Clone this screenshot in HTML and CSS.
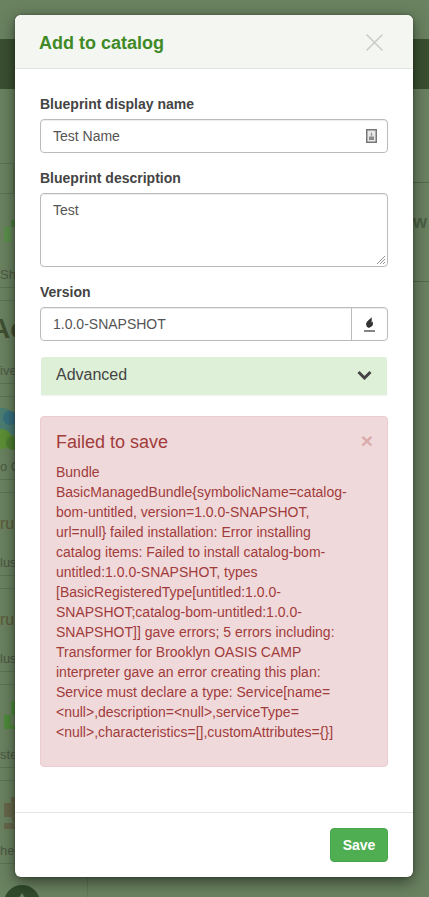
FILE: index.html
```html
<!DOCTYPE html>
<html lang="en">
<head>
<meta charset="utf-8">
<title>Add to catalog</title>
<link rel="stylesheet" href="styles.css">
</head>
<body>
<div class="page">
  <div class="topbar"></div>
  <div class="navband"></div>
  <div class="content">
    <div class="catalog">
      <div class="cat-head"></div>
      <div class="cat-row r2"><svg class="tile-icon" width="30" height="32" viewBox="0 0 30 32"><path fill="#5c8f4c" d="M4 7h7v15H4z"/><path fill="#4c7d40" d="M11 0h4v7h-4z"/></svg><span class="cat-text">Sho</span></div>
      <div class="cat-row r3"><span class="cat-logo">Ac</span><span class="cat-text">ive</span></div>
      <div class="cat-row r4"><svg class="tile-icon" width="30" height="60" viewBox="0 0 30 60"><circle cx="2" cy="21" r="16" fill="#4a7d72"/><circle cx="10" cy="15" r="7" fill="#37707f"/><circle cx="2" cy="36" r="10" fill="#5c8e35"/><circle cx="13" cy="40" r="7" fill="#4e7f32"/></svg><span class="cat-text">o C</span></div>
      <div class="cat-row r5"><span class="cat-name">ruc</span><span class="cat-text">lust</span></div>
      <div class="cat-row r6"><span class="cat-name">ruc</span><span class="cat-text">lust</span></div>
      <div class="cat-row r7"><svg class="tile-icon" width="30" height="36" viewBox="0 0 30 36"><path fill="#4f8a3c" d="M11 0h5v14h-5zM4 14h7v14H4zM11 24h5v4h-5z"/></svg><span class="cat-text">ster</span></div>
      <div class="cat-row r8"><svg class="tile-icon" width="30" height="36" viewBox="0 0 30 36"><path fill="#66684a" d="M11 0h5v6h-5zM4 6h11v14H4zM11 20h5v6H4v6h12z"/></svg><span class="cat-text">hed</span></div>
    </div>
    <div class="main-panel">
      <div class="main-row"><span class="main-letter">w</span></div>
    </div>
  </div>
  <div class="avatar"><svg width="36" height="36" viewBox="0 0 36 36"><path d="M18 8l7 11H11z" fill="#6a8260"/></svg></div>
</div>

<div class="modal">
  <header class="modal-head">
    <h1 class="modal-title">Add to catalog</h1>
    <svg class="close-icon" width="17" height="17" viewBox="0 0 17 17"><path d="M.5.5l16 16M16.500.5l-16 16" stroke="#c9ccc7" stroke-width="1.500" fill="none"/></svg>
  </header>
  <div class="modal-body">
    <label class="field-label">Blueprint display name</label>
    <div class="input-box">
      <span class="input-text">Test Name</span>
      <svg class="contact-icon" width="11" height="14" viewBox="0 0 11 14"><rect x=".75" y=".75" width="9.500" height="12.500" fill="#e8e8e8" stroke="#777" stroke-width="1.500"/><path d="M5.500 3l1 3.500h-2zM3 7.500h5v3.500H3z" fill="#8a8a8a"/></svg>
    </div>
    <label class="field-label">Blueprint description</label>
    <div class="textarea-box">
      <span class="input-text">Test</span>
      <svg class="resize-grip" width="8" height="8" viewBox="0 0 8 8"><path d="M0 8l8-8M3 8l5-5M6 8l2-2" stroke="#777" stroke-width=".8" fill="none"/></svg>
    </div>
    <label class="field-label">Version</label>
    <div class="input-box version-box">
      <span class="input-text">1.0.0-SNAPSHOT</span>
      <span class="addon"><svg width="11" height="15" viewBox="0 0 11 15"><path fill="#333" d="M7.500 0C7 1.500 5.500 2.300 4.200 3.400 2.600 4.800 1.800 6.300 2.200 8c.3 1.500 1.300 2.700 2.900 3 .2-.5.700-.8 1.400-1 1.500-.6 2.500-1.800 2.500-3.500 0-1-.4-1.800-1-2.500.1.800-.1 1.300-.6 1.700C7.700 4 8 2 7.500 0z"/><path d="M0 14h11" stroke="#333" stroke-width="1.200"/></svg></span>
    </div>
    <div class="advanced">
      <span class="advanced-text">Advanced</span>
      <svg width="15" height="10" viewBox="0 0 15 10"><path d="M1.500 2l6 6 6-6" stroke="#444" stroke-width="3" fill="none"/></svg>
    </div>
    <div class="alert">
      <span class="alert-close">×</span>
      <h2 class="alert-title">Failed to save</h2>
      <p class="alert-text">Bundle BasicManagedBundle{symbolicName=catalog-bom-untitled, version=1.0.0-SNAPSHOT, url=null} failed installation: Error installing catalog items: Failed to install catalog-bom-untitled:1.0.0-SNAPSHOT, types [BasicRegisteredType[untitled:1.0.0-SNAPSHOT;catalog-bom-untitled:1.0.0-SNAPSHOT]] gave errors; 5 errors including: Transformer for Brooklyn OASIS CAMP interpreter gave an error creating this plan: Service must declare a type: Service[name=&lt;null&gt;,description=&lt;null&gt;,serviceType=&lt;null&gt;,characteristics=[],customAttributes={}]</p>
    </div>
  </div>
  <footer class="modal-foot">
    <button class="save-btn">Save</button>
  </footer>
</div>
</body>
</html>
```
FILE: styles.css
```css
* { box-sizing: border-box; }
html, body { margin: 0; padding: 0; height: 100%; overflow: hidden; }
body {
  font-family: "Liberation Sans", Arial, sans-serif;
  font-size: 14px;
  color: #444;
  background: #6a8260;
}
.page { height: 897px; overflow: hidden; position: relative; }
.topbar { height: 39px; background: #6a8260; }
.navband { height: 50px; background: #3a5030; }
.content { display: flex; height: 808px; }
.catalog { padding-top: 74px; width: 88px; flex: none; border-right: 1px solid #5f7656; }
.cat-head {
  height: 31px;
  margin-bottom: 10px;
  width: 14px;
  border-top: 1px solid #5c7253;
  border-bottom: 1px solid #5c7253;
  border-right: 1px solid #5c7253;
}
.cat-row {
  height: 84px;
  margin-bottom: 12px;
  border-bottom: 1px solid #5c7253;
  border-top: 1px solid #5c7253;
  position: relative;
  overflow: hidden;
}
.r2 { border-top: none; }
.tile-icon { position: absolute; left: 0; top: 16px; }
.r4 .tile-icon { top: 6px; }
.cat-text {
  position: absolute;
  left: 0;
  bottom: 5px;
  font-size: 13px;
  color: #4a5843;
  line-height: 14px;
}
.cat-logo { position: absolute; left: -10px; top: 12px; font-size: 28px; font-weight: bold; color: #3f4f30; }
.cat-name { position: absolute; left: 0; top: 22px; font-size: 16px; color: #5d5a35; }
.main-panel { flex: 1; padding-top: 93px; }
.main-row {
  height: 100px;
  border-top: 1px solid #55694c;
  border-bottom: 1px solid #55694c;
  padding: 29px 0 0 325px;
  overflow: hidden;
}
.main-letter { display: block; font-size: 18px; font-weight: bold; line-height: 20px; color: #4c5f44; }
.avatar {
  position: absolute;
  left: 4px;
  top: 885px;
  width: 36px;
  height: 36px;
  border-radius: 50%;
  background: #2f4a2a;
}
.avatar svg { display: block; }
.modal {
  position: absolute;
  left: 15px;
  top: 15px;
  width: 398px;
  height: 862px;
  background: #fff;
  border-radius: 6px;
  box-shadow: 0 5px 15px rgba(0, 0, 0, .5), 0 0 3px rgba(0, 0, 0, .3);
  display: flex;
  flex-direction: column;
  overflow: hidden;
}
.modal-head {
  height: 54px;
  flex: none;
  background: #f4f6f1;
  border-bottom: 1px solid #e2e4e2;
  padding: 2px 30px 0 24px;
  display: flex;
  align-items: center;
  justify-content: space-between;
}
.modal-title { margin: 0; font-size: 18px; font-weight: bold; color: #3f8a26; line-height: 20px; }
.close-icon { display: block; }
.modal-body { flex: 1; padding: 27px 25px 0; }
.field-label { display: block; font-size: 14px; font-weight: bold; color: #444; line-height: 16px; margin-bottom: 7px; }
.input-box {
  height: 34px;
  border: 1px solid #bbb;
  border-radius: 4px;
  padding: 0 12px;
  display: flex;
  align-items: center;
  justify-content: space-between;
  margin-bottom: 17px;
  box-shadow: inset 0 1px 1px rgba(0, 0, 0, .075);
}
.input-text { font-size: 14px; color: #555; line-height: 20px; }
.contact-icon { margin-right: -2px; display: block; }
.textarea-box {
  height: 74px;
  border: 1px solid #bbb;
  border-radius: 4px;
  padding: 6px 12px;
  position: relative;
  margin-bottom: 17px;
  box-shadow: inset 0 1px 1px rgba(0, 0, 0, .075);
}
.textarea-box .input-text { display: block; }
.resize-grip { position: absolute; right: 2px; bottom: 2px; }
.version-box { padding-right: 0; margin-bottom: 16px; }
.addon {
  width: 36px;
  height: 32px;
  border-left: 1px solid #bbb;
  display: flex;
  align-items: center;
  justify-content: center;
}
.advanced {
  margin: 0 1px 21px;
  height: 38px;
  background: #dff0d8;
  border-radius: 3px 3px 0 0;
  box-shadow: 0 1px 1px rgba(0, 0, 0, .05);
  display: flex;
  align-items: center;
  justify-content: space-between;
  padding: 0 15px 2px 15px;
}
.advanced-text { font-size: 16px; color: #444; line-height: 18px; }
.alert {
  height: 351px;
  background: #f0d9da;
  border: 1px solid #ebccd1;
  border-radius: 4px;
  padding: 15px 35px 0 15px;
  position: relative;
  color: #a03c3c;
}
.alert-close {
  position: absolute;
  right: 14px;
  top: 13px;
  font-size: 21px;
  font-weight: bold;
  line-height: 21px;
  color: #a94442;
  opacity: .3;
}
.alert-title { margin: 0 0 10px; font-size: 18px; font-weight: normal; line-height: 20px; color: #a03c3c; }
.alert-text { margin: 0; font-size: 14px; line-height: 20px; color: #a03c3c; overflow-wrap: break-word; }
.modal-foot {
  height: 65px;
  flex: none;
  border-top: 1px solid #e5e5e5;
  padding: 15px 25px 0;
  display: flex;
  justify-content: flex-end;
  align-items: flex-start;
}
.save-btn {
  width: 58px;
  height: 34px;
  background: #4fae52;
  border: 1px solid #49a64c;
  border-radius: 4px;
  color: #fff;
  font-family: inherit;
  font-size: 14px;
  font-weight: bold;
  padding: 0;
}
```
